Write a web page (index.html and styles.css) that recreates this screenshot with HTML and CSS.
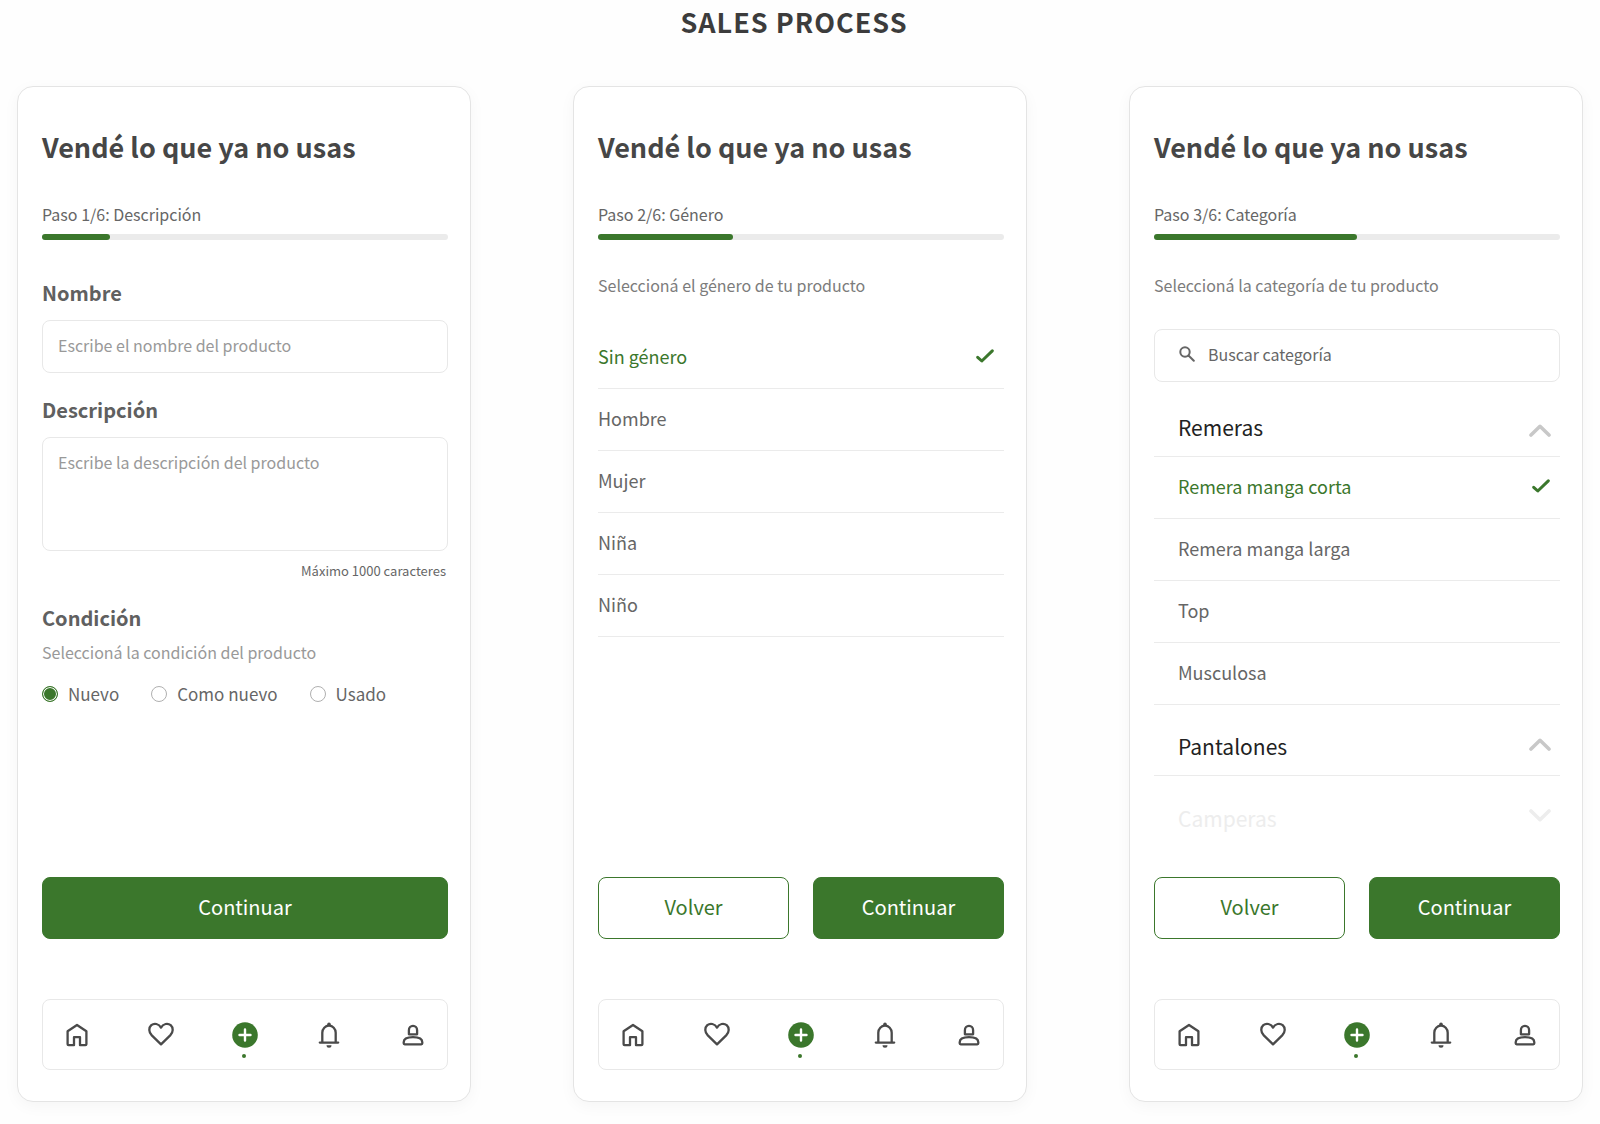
FILE: index.html
```html
<!DOCTYPE html>
<html lang="es">
<head>
  <meta charset="UTF-8">
  <meta name="viewport" content="width=device-width, initial-scale=1.0">
  <title>Sales process</title>
  <link rel="stylesheet" href="styles.css">
</head>
<body>
  <!-- Shared icons -->
  <svg class="sprite" aria-hidden="true">
    <symbol id="icon-home" viewBox="0 0 26 26">
      <path d="M3.6 9.2 13 3l9.4 6.2v13a1 1 0 0 1-1 1H16v-8h-6v8H4.6a1 1 0 0 1-1-1z"/>
    </symbol>
    <symbol id="icon-heart" viewBox="0 0 26 26">
      <path d="M13 22.4 3.8 13.4C.5 10 .6 5.600 3.300 3.200 6.200.8 10.800 1.600 13 5.600c2.200-4 6.800-4.800 9.700-2.400 2.700 2.400 2.800 6.800-.5 10.200z"/>
    </symbol>
    <symbol id="icon-plus" viewBox="0 0 26 26">
      <circle cx="13" cy="13" r="12.8" fill="#3b772c" stroke="none"/>
      <path d="M13 7.5v11M7.5 13h11" stroke="#fff" stroke-width="2.4"/>
    </symbol>
    <symbol id="icon-bell" viewBox="0 0 26 26">
      <path d="M6.3 20.5v-9.8a6.7 7 0 0 1 13.4 0v9.8M3.8 20.6h18.4"/>
      <circle cx="13" cy="2.2" r="1.8" fill="#4a4a4a" stroke="none"/>
      <path d="M10.500 23.200h5a2.500 2.500 0 0 1-5 0z" fill="#4a4a4a" stroke="none"/>
    </symbol>
    <symbol id="icon-user" viewBox="0 0 26 26">
      <path d="M8.9 12.3V8.2a4.1 4.3 0 0 1 8.2 0v4.1z"/>
      <path d="M3.7 20.2c0-3.5 4.6-5 9.3-5s9.3 1.5 9.3 5v1.1a1 1 0 0 1-1 1H4.7a1 1 0 0 1-1-1z"/>
    </symbol>
    <symbol id="icon-check" viewBox="0 0 18 14">
      <path d="M1.7 8.3 5.8 12 16.3 1.8" stroke-width="3"/>
    </symbol>
    <symbol id="icon-up" viewBox="0 0 22 13">
      <path d="M2 11 11 2.3 20 11" stroke-width="3.6"/>
    </symbol>
    <symbol id="icon-down" viewBox="0 0 22 13">
      <path d="M2 2 11 10.7 20 2" stroke-width="3.6"/>
    </symbol>
    <symbol id="icon-search" viewBox="0 0 16 16">
      <circle cx="6" cy="6" r="4.7"/>
      <path d="M9.5 9.5 14.8 14.8"/>
    </symbol>
  </svg>

  <h1>SALES PROCESS</h1>

  <main class="screens">
    <!-- Step 1 -->
    <section class="card">
      <h2>Vendé lo que ya no usas</h2>
      <p class="step">Paso 1/6: Descripción</p>
      <div class="progress"><div class="progress-fill" style="width: 16.67%"></div></div>

      <form class="description">
        <label class="field-title" for="name">Nombre</label>
        <input class="field" type="text" id="name" placeholder="Escribe el nombre del producto">

        <label class="field-title" for="description">Descripción</label>
        <textarea class="field" id="description" maxlength="1000" placeholder="Escribe la descripción del producto"></textarea>
        <p class="limit">Máximo 1000 caracteres</p>

        <fieldset class="condition">
          <legend class="field-title">Condición</legend>
          <p class="condition-hint">Seleccioná la condición del producto</p>
          <div class="radios">
            <label><input type="radio" name="condition" checked>Nuevo</label>
            <label><input type="radio" name="condition">Como nuevo</label>
            <label><input type="radio" name="condition">Usado</label>
          </div>
        </fieldset>
      </form>

      <div class="actions">
        <button class="primary" type="button">Continuar</button>
      </div>
      <nav class="tabs">
        <a href="#" aria-label="Inicio"><svg><use href="#icon-home"/></svg></a>
        <a href="#" aria-label="Favoritos"><svg><use href="#icon-heart"/></svg></a>
        <a href="#" class="active" aria-label="Vender"><svg><use href="#icon-plus"/></svg></a>
        <a href="#" aria-label="Notificaciones"><svg><use href="#icon-bell"/></svg></a>
        <a href="#" aria-label="Perfil"><svg><use href="#icon-user"/></svg></a>
      </nav>
    </section>

    <!-- Step 2 -->
    <section class="card">
      <h2>Vendé lo que ya no usas</h2>
      <p class="step">Paso 2/6: Género</p>
      <div class="progress"><div class="progress-fill" style="width: 33.33%"></div></div>
      <p class="hint">Seleccioná el género de tu producto</p>

      <div class="options genders">
        <label class="option"><input type="radio" name="gender" checked><span>Sin género</span><svg><use href="#icon-check"/></svg></label>
        <label class="option"><input type="radio" name="gender"><span>Hombre</span><svg><use href="#icon-check"/></svg></label>
        <label class="option"><input type="radio" name="gender"><span>Mujer</span><svg><use href="#icon-check"/></svg></label>
        <label class="option"><input type="radio" name="gender"><span>Niña</span><svg><use href="#icon-check"/></svg></label>
        <label class="option"><input type="radio" name="gender"><span>Niño</span><svg><use href="#icon-check"/></svg></label>
      </div>

      <div class="actions">
        <button class="secondary" type="button">Volver</button>
        <button class="primary" type="button">Continuar</button>
      </div>
      <nav class="tabs">
        <a href="#" aria-label="Inicio"><svg><use href="#icon-home"/></svg></a>
        <a href="#" aria-label="Favoritos"><svg><use href="#icon-heart"/></svg></a>
        <a href="#" class="active" aria-label="Vender"><svg><use href="#icon-plus"/></svg></a>
        <a href="#" aria-label="Notificaciones"><svg><use href="#icon-bell"/></svg></a>
        <a href="#" aria-label="Perfil"><svg><use href="#icon-user"/></svg></a>
      </nav>
    </section>

    <!-- Step 3 -->
    <section class="card">
      <h2>Vendé lo que ya no usas</h2>
      <p class="step">Paso 3/6: Categoría</p>
      <div class="progress"><div class="progress-fill" style="width: 50%"></div></div>
      <p class="hint">Seleccioná la categoría de tu producto</p>

      <label class="search">
        <svg><use href="#icon-search"/></svg>
        <input type="text" placeholder="Buscar categoría" aria-label="Buscar categoría">
      </label>

      <div class="options categories">
        <button class="category open" type="button" aria-expanded="true">Remeras<svg><use href="#icon-up"/></svg></button>
        <label class="option"><input type="radio" name="category" checked><span>Remera manga corta</span><svg><use href="#icon-check"/></svg></label>
        <label class="option"><input type="radio" name="category"><span>Remera manga larga</span><svg><use href="#icon-check"/></svg></label>
        <label class="option"><input type="radio" name="category"><span>Top</span><svg><use href="#icon-check"/></svg></label>
        <label class="option"><input type="radio" name="category"><span>Musculosa</span><svg><use href="#icon-check"/></svg></label>
        <button class="category" type="button">Pantalones<svg><use href="#icon-up"/></svg></button>
        <button class="category faded" type="button">Camperas<svg><use href="#icon-down"/></svg></button>
      </div>

      <div class="actions">
        <button class="secondary" type="button">Volver</button>
        <button class="primary" type="button">Continuar</button>
      </div>
      <nav class="tabs">
        <a href="#" aria-label="Inicio"><svg><use href="#icon-home"/></svg></a>
        <a href="#" aria-label="Favoritos"><svg><use href="#icon-heart"/></svg></a>
        <a href="#" class="active" aria-label="Vender"><svg><use href="#icon-plus"/></svg></a>
        <a href="#" aria-label="Notificaciones"><svg><use href="#icon-bell"/></svg></a>
        <a href="#" aria-label="Perfil"><svg><use href="#icon-user"/></svg></a>
      </nav>
    </section>
  </main>
</body>
</html>
```
FILE: styles.css
```css
* {
  box-sizing: border-box;
}

body {
  margin: 0;
  padding-bottom: 21px;
  background: #fefefe;
  color: #666;
  font-family: "Noto Sans CJK SC", "Noto Sans", sans-serif;
  font-size: 16px;
  line-height: 24px;
}

h1, h2, p {
  margin: 0;
}

input, textarea, button {
  font-family: inherit;
}

svg {
  display: block;
  flex: none;
  fill: none;
  stroke: currentColor;
  stroke-width: 2;
  stroke-linecap: round;
  stroke-linejoin: round;
}

.sprite {
  position: absolute;
  width: 0;
  height: 0;
}

h1 {
  margin-bottom: 42px;
  padding-right: 12px;
  color: #3c3c3c;
  font-size: 27px;
  line-height: 44px;
  letter-spacing: 1px;
  text-align: center;
}

.screens {
  display: grid;
  grid-template-columns: repeat(auto-fit, minmax(360px, 1fr));
  gap: 40px 102px;
  padding: 0 17px;
}

.card {
  display: flex;
  flex-direction: column;
  padding: 40px 22px 31px 24px;
  background: #fff;
  border: 1px solid #e4e4e4;
  border-radius: 16px;
  box-shadow: 0 4px 16px rgba(0, 0, 0, 0.04);
}

h2 {
  color: #464646;
  font-size: 27px;
  font-weight: 700;
  line-height: 40px;
}

.step {
  margin-top: 35px;
}

.progress {
  height: 6px;
  margin-top: 8px;
  background: #ebebeb;
  border-radius: 3px;
}

.progress-fill {
  height: 100%;
  background: #3b772c;
  border-radius: 3px;
}

.hint {
  margin-top: 33px;
  color: #7c7c7c;
}

/* Step 1: description form */
.description {
  display: flex;
  flex-direction: column;
  margin-top: 39px;
}

.field-title {
  padding: 0;
  color: #606060;
  font-size: 20px;
  font-weight: 700;
  line-height: 28px;
}

.field {
  height: 53px;
  margin: 13px 0 23px;
  padding: 10px 15px 14px;
  background: #fff;
  border: 1px solid #e8e8e8;
  border-radius: 8px;
  font-size: 16px;
  line-height: 24px;
  resize: none;
}

textarea.field {
  height: 114px;
  margin-bottom: 10px;
  padding-top: 12px;
}

.field::placeholder {
  color: #999;
}

.limit {
  padding-right: 2px;
  font-size: 13px;
  line-height: 20px;
  text-align: right;
}

.condition {
  margin: 23px 0 0;
  padding: 0;
  border: none;
}

.condition-hint {
  margin-top: 8px;
  color: #999;
}

.radios {
  display: flex;
  gap: 32px;
  margin-top: 18px;
  font-size: 17px;
}

.radios label {
  display: flex;
  align-items: center;
  gap: 10px;
}

.radios input {
  appearance: none;
  width: 16px;
  height: 16px;
  margin: 0;
  border: 1px solid #b0b0b0;
  border-radius: 50%;
}

.radios input:checked {
  background: #3b772c;
  border-color: #3b772c;
  box-shadow: inset 0 0 0 1px #fff;
}

/* Steps 2 and 3: option lists */
.options {
  display: flex;
  flex-direction: column;
}

.genders {
  margin-top: 30px;
}

.option {
  display: flex;
  align-items: center;
  justify-content: space-between;
  height: 62px;
  padding: 0 10px 4px 0;
  border-bottom: 1px solid #ebebeb;
  font-size: 18px;
}

.option input {
  position: absolute;
  opacity: 0;
}

.option svg {
  display: none;
  width: 18px;
  height: 14px;
}

.option input:checked ~ span,
.option input:checked ~ svg {
  display: block;
  color: #3b772c;
}

.categories {
  margin-top: 4px;
}

.categories .option {
  padding-left: 24px;
}

.category {
  display: flex;
  align-items: center;
  justify-content: space-between;
  height: 71px;
  padding: 12px 9px 0 24px;
  background: none;
  border: none;
  border-bottom: 1px solid #ebebeb;
  color: #222;
  font-size: 21px;
  line-height: 28px;
}

.category svg {
  width: 22px;
  height: 13px;
  margin-bottom: 4px;
  color: #c8c8c8;
}

.category.open svg {
  margin: 6px 0 0;
}

.category.faded,
.category.faded svg {
  border: none;
  color: #ededed;
}

.search {
  display: flex;
  align-items: center;
  gap: 13px;
  height: 53px;
  margin-top: 32px;
  padding: 0 24px 3px;
  border: 1px solid #e8e8e8;
  border-radius: 8px;
}

.search svg {
  width: 16px;
  height: 16px;
}

.search input {
  flex: 1;
  min-width: 0;
  padding: 0;
  background: none;
  border: none;
  outline: none;
  font-size: 16px;
  line-height: 24px;
}

.search input::placeholder {
  color: #666;
}

/* Footer of every screen */
.actions {
  display: flex;
  gap: 24px;
  margin-top: auto;
}

.categories + .actions {
  padding-top: 30px;
}

.actions button {
  flex: 1;
  height: 62px;
  padding-bottom: 4px;
  border: 1px solid #3b772c;
  border-radius: 8px;
  font-size: 20px;
  cursor: pointer;
}

.primary {
  background: #3b772c;
  color: #fff;
}

.secondary {
  background: #fff;
  color: #3b772c;
}

.tabs {
  display: flex;
  align-items: center;
  justify-content: space-between;
  height: 71px;
  margin-top: 60px;
  padding: 0 21px;
  border: 1px solid #e8e8e8;
  border-radius: 8px;
}

.tabs a {
  position: relative;
  color: #4a4a4a;
}

.tabs svg {
  width: 26px;
  height: 26px;
  stroke-width: 2.3;
}

.tabs .active::after {
  content: "";
  position: absolute;
  left: 10px;
  top: 32px;
  width: 4px;
  height: 4px;
  background: #3b772c;
  border-radius: 50%;
}
```
